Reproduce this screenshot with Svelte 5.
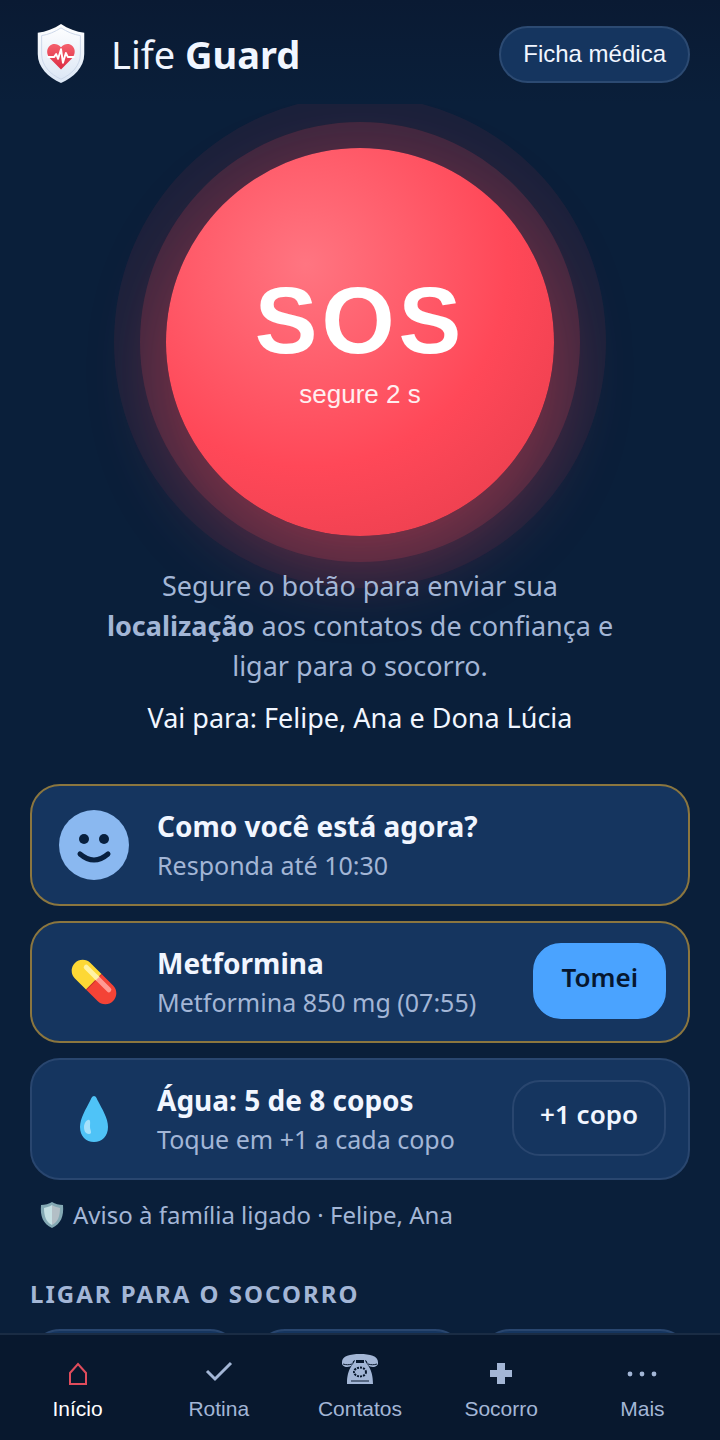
<script lang="ts">
	interface Card {
		icon: string;
		title: string;
		sub: string;
		due: boolean;
		action?: string;
		primary?: boolean;
	}

	const cards: Card[] = [
		{ icon: 'face', title: 'Como você está agora?', sub: 'Responda até 10:30', due: true },
		{ icon: 'pill', title: 'Metformina', sub: 'Metformina 850 mg (07:55)', due: true, action: 'Tomei', primary: true },
		{ icon: 'drop', title: 'Água: 5 de 8 copos', sub: 'Toque em +1 a cada copo', due: false, action: '+1 copo' }
	];

	const calls = [
		{ label: 'SAMU', tel: '192' },
		{ label: 'Bombeiros', tel: '193' },
		{ label: 'Polícia', tel: '190' }
	];

	const tabs = [
		{ id: 'home', label: 'Início' },
		{ id: 'check', label: 'Rotina' },
		{ id: 'phone', label: 'Contatos' },
		{ id: 'cross', label: 'Socorro' },
		{ id: 'more', label: 'Mais' }
	];

	let current = $state('home');
</script>

<div class="app">
	<header>
		<svg class="logo" viewBox="0 0 64 64" aria-hidden="true">
			<defs>
				<linearGradient id="shield" x1="0" y1="0" x2="0" y2="1">
					<stop offset="0" stop-color="#ffffff" />
					<stop offset="1" stop-color="#dbe6f5" />
				</linearGradient>
				<linearGradient id="heart" x1="0" y1="0" x2="0" y2="1">
					<stop offset="0" stop-color="#f4606c" />
					<stop offset="1" stop-color="#dc2c44" />
				</linearGradient>
			</defs>
			<path d="M32 1 C39 6 48 9 56 10 V32 C56 46 45 56 32 62 C19 56 8 46 8 32 V10 C16 9 25 6 32 1Z" fill="url(#shield)" />
			<path d="M32 5 C38 9 45 12 52 13 V32 C52 44 43 53 32 58 C21 53 12 44 12 32 V13 C19 12 26 9 32 5Z" fill="none" stroke="#cbd7e9" stroke-width="1" />
			<path d="M32 48 L21 37 C12 27 24 16 32 25 C40 16 52 27 43 37Z" fill="url(#heart)" />
			<path d="M18 35 H25 L27 32 L29 37 L32 27 L34 41 L37 31 L39 35 H46" fill="none" stroke="#fff" stroke-width="2" stroke-linejoin="round" />
		</svg>
		<h1>Life <b>Guard</b></h1>
		<button class="record" type="button">Ficha médica</button>
	</header>

	<main>
		<section class="hero">
			<button class="sos" type="button">
				<span class="sos-title">SOS</span>
				<span class="sos-sub">segure 2 s</span>
			</button>
			<p class="hint">Segure o botão para enviar sua <b>localização</b> aos contatos de confiança e ligar para o socorro.</p>
			<p class="targets">Vai para: Felipe, Ana e Dona Lúcia</p>
		</section>

		<section class="cards">
			{#each cards as card}
				<article class="card" class:due={card.due}>
					{#if card.icon === 'face'}
						<svg class="icon" viewBox="0 0 70 70" aria-hidden="true">
							<circle cx="35" cy="35" r="35" fill="#8ab8f0" />
							<circle cx="25" cy="29" r="5" fill="#08203f" />
							<circle cx="45" cy="29" r="5" fill="#08203f" />
							<path d="M21 44 Q35 56 49 44" fill="none" stroke="#08203f" stroke-width="5" stroke-linecap="round" />
						</svg>
					{:else if card.icon === 'pill'}
						<svg class="icon" viewBox="0 0 70 70" aria-hidden="true">
							<g transform="rotate(45 35 35)">
								<path d="M35 24 H19 A11 11 0 0 0 19 46 H35Z" fill="#fdd835" />
								<path d="M35 24 H51 A11 11 0 0 1 51 46 H35Z" fill="#f44336" />
								<path d="M35 24 V46" stroke="#c9342b" stroke-width="1" />
								<path d="M19 30 H35" stroke="#fff3a5" stroke-width="5" stroke-linecap="round" />
								<path d="M35 30 H51" stroke="#ff9a94" stroke-width="5" stroke-linecap="round" />
								<path d="M32 30 H35" stroke="#fff3a5" stroke-width="5" />
							</g>
						</svg>
					{:else}
						<svg class="icon" viewBox="0 0 70 70" aria-hidden="true">
							<path d="M35 12 C37 12 38 15 39 17 C43 25 49 34 49 43 C49 52 43 58 35 58 C27 58 21 52 21 43 C21 34 27 25 31 17 C32 15 33 12 35 12Z" fill="#4fc3f7" />
							<path d="M29 36 C32 35 31 40 31 43 C31 46 34 50 30 50 C26 50 25 46 25 43 C25 40 27 36 29 36Z" fill="#a5e1fb" />
						</svg>
					{/if}
					<div class="card-text">
						<h2>{card.title}</h2>
						<p>{card.sub}</p>
					</div>
					{#if card.action}
						<button class="action" class:primary={card.primary} type="button">{card.action}</button>
					{/if}
				</article>
			{/each}
		</section>

		<p class="notice">
			<svg viewBox="0 0 24 28" aria-hidden="true">
				<path d="M12 1 C15 3 19 4 23 4 C24 15 21 23 12 27 C3 23 0 15 1 4 C5 4 9 3 12 1Z" fill="#84a9b4" />
				<path d="M12 4 C9 6 6 6 4 7 C4 15 6 21 12 24Z" fill="#c5e0e3" />
				<path d="M12 4 C15 6 18 6 20 7 C20 15 18 21 12 24Z" fill="#b3bfc6" />
			</svg>
			Aviso à família ligado · Felipe, Ana
		</p>

		<h3>Ligar para o socorro</h3>
		<div class="calls">
			{#each calls as call}
				<a href="tel:{call.tel}" aria-label={call.label}></a>
			{/each}
		</div>
	</main>

	<nav>
		{#each tabs as tab}
			<button class="tab" class:active={current === tab.id} type="button" onclick={() => (current = tab.id)}>
				<svg viewBox="0 0 40 40" aria-hidden="true">
					{#if tab.id === 'home'}
						<path d="M12 35 V24 L20 15 L28 24 V35Z" fill="none" stroke="currentColor" stroke-width="2" />
					{:else if tab.id === 'check'}
						<path d="M8 22 L16 30 L32 14" fill="none" stroke="currentColor" stroke-width="3" />
					{:else if tab.id === 'phone'}
						<path d="M2 13 C2 7 10 5 20 5 C30 5 38 7 38 13 C39 19 30 19 28 16 C27 14 28 12 25 11 H15 C12 12 13 14 12 16 C10 19 1 19 2 13Z" fill="currentColor" />
						<path d="M15 11 H16 V14 H24 V11 H25 C26 16 33 18 33 35 H7 C7 18 14 16 15 11Z" fill="currentColor" />
						<path d="M3 15 C6 16 9 16 12 15 M28 15 C31 16 34 16 37 15 M11 32 H29" fill="none" stroke="#08182e" stroke-width="1" />
						<ellipse cx="20" cy="23" rx="6" ry="4.4" fill="none" stroke="#08182e" stroke-width="2" stroke-dasharray="2 1" />
					{:else if tab.id === 'cross'}
						<path d="M16 14 H24 V21 H31 V28 H24 V35 H16 V28 H9 V21 H16Z" fill="currentColor" />
					{:else}
						<circle cx="8" cy="25" r="2.4" fill="currentColor" />
						<circle cx="20" cy="25" r="2.4" fill="currentColor" />
						<circle cx="32" cy="25" r="2.4" fill="currentColor" />
					{/if}
				</svg>
				<span>{tab.label}</span>
			</button>
		{/each}
	</nav>
</div>

<style>
	:global(body) {
		margin: 0;
		background: #0a1f3a;
	}
	.app {
		display: flex;
		flex-direction: column;
		height: 100vh;
		color: #f1f6ff;
		background: linear-gradient(#0a1a33, #0a1f3a 104px);
		font-family: 'Noto Sans', sans-serif;
	}
	h1, h2, h3, p {
		margin: 0;
	}
	button {
		cursor: pointer;
	}

	header {
		display: flex;
		align-items: center;
		gap: 19px;
		box-sizing: border-box;
		height: 104px;
		padding: 4px 30px 0;
		flex: none;
	}
	.logo {
		width: 62px;
		height: 62px;
	}
	h1 {
		flex: 1;
		font-size: 38px;
		font-weight: 400;
		line-height: 54px;
	}
	h1 b {
		font-weight: 700;
	}
	.record {
		box-sizing: border-box;
		height: 57px;
		padding: 0 22px;
		border: 2px solid #2c4a72;
		border-radius: 29px;
		background: #15355f;
		color: #f1f6ff;
		font: 24px 'Liberation Sans', Arial, sans-serif;
	}

	main {
		flex: 1;
		min-height: 0;
		padding: 0 30px;
		overflow-y: auto;
		scrollbar-width: none;
	}
	.hero {
		display: flex;
		flex-direction: column;
		align-items: center;
		padding-top: 44px;
		text-align: center;
	}
	.sos {
		display: flex;
		flex-direction: column;
		align-items: center;
		justify-content: center;
		gap: 10px;
		width: 388px;
		height: 388px;
		padding: 0 0 2px;
		border: 0;
		border-radius: 50%;
		color: #fff;
		background: radial-gradient(circle at 36% 30%, #ff7581, #ff4858 55%, #e23b4b);
		box-shadow: 0 0 0 26px rgba(255, 72, 88, 0.16), 0 0 0 52px rgba(255, 72, 88, 0.07), 0 28px 74px rgba(255, 72, 88, 0.35);
		font-family: 'Liberation Sans', Arial, sans-serif;
	}
	.sos-title {
		font-size: 94px;
		font-weight: 700;
		line-height: 96px;
		letter-spacing: 4px;
	}
	.sos-sub {
		font-size: 26px;
		line-height: 30px;
		opacity: 0.9;
	}
	.hint {
		max-width: 550px;
		margin-top: 30px;
		color: #a3b6d6;
		font-size: 27px;
		line-height: 40px;
	}
	.targets {
		margin-top: 12px;
		font-size: 27px;
		line-height: 40px;
	}

	.cards {
		display: flex;
		flex-direction: column;
		gap: 15px;
		margin-top: 46px;
	}
	.card {
		display: flex;
		align-items: center;
		gap: 28px;
		box-sizing: border-box;
		min-height: 122px;
		padding: 0 22px 0 27px;
		border: 2px solid #29466f;
		border-radius: 30px;
		background: #15355f;
	}
	.card.due {
		border-color: #8b763f;
	}
	.icon {
		width: 70px;
		height: 70px;
		flex: none;
	}
	.card-text {
		flex: 1;
		padding-bottom: 1px;
	}
	h2 {
		font-size: 28px;
		font-weight: 700;
		line-height: 40px;
	}
	.card-text p {
		color: #a3b6d6;
		font-size: 25px;
		line-height: 38px;
	}
	.action {
		box-sizing: border-box;
		height: 76px;
		margin-bottom: 2px;
		padding: 0 26px 8px;
		border: 2px solid #29466f;
		border-radius: 28px;
		background: transparent;
		color: #f1f6ff;
		font: 600 26px 'Noto Sans', sans-serif;
	}
	.action.primary {
		border-color: #4aa3ff;
		background: #4aa3ff;
		color: #061730;
	}
	.notice {
		display: flex;
		align-items: center;
		gap: 9px;
		margin-top: 16px;
		padding-left: 10px;
		color: #a3b6d6;
		font-size: 24px;
		line-height: 38px;
	}
	.notice svg {
		width: 24px;
		height: 28px;
	}
	h3 {
		margin-top: 42px;
		color: #a3b6d6;
		font-size: 24px;
		font-weight: 700;
		line-height: 36px;
		letter-spacing: 2px;
		text-transform: uppercase;
	}
	.calls {
		display: grid;
		grid-template-columns: repeat(3, 1fr);
		gap: 15px;
		margin-top: 17px;
		padding-bottom: 30px;
	}
	.calls a {
		height: 130px;
		border: 2px solid #29466f;
		border-radius: 30px;
		background: #15355f;
	}

	nav {
		display: grid;
		grid-template-columns: repeat(5, 1fr);
		box-sizing: border-box;
		height: 107px;
		padding: 0 7px;
		flex: none;
		border-top: 2px solid #1a2c44;
		background: #08182e;
	}
	.tab {
		display: flex;
		flex-direction: column;
		align-items: center;
		gap: 5px;
		padding: 14px 0 0;
		border: 0;
		background: none;
		color: #a3b6d6;
		font: 21px/30px 'Liberation Sans', Arial, sans-serif;
	}
	.tab svg {
		width: 40px;
		height: 40px;
	}
	.tab.active {
		color: #fff;
	}
	.tab.active svg {
		color: #e04c5c;
	}
</style>
